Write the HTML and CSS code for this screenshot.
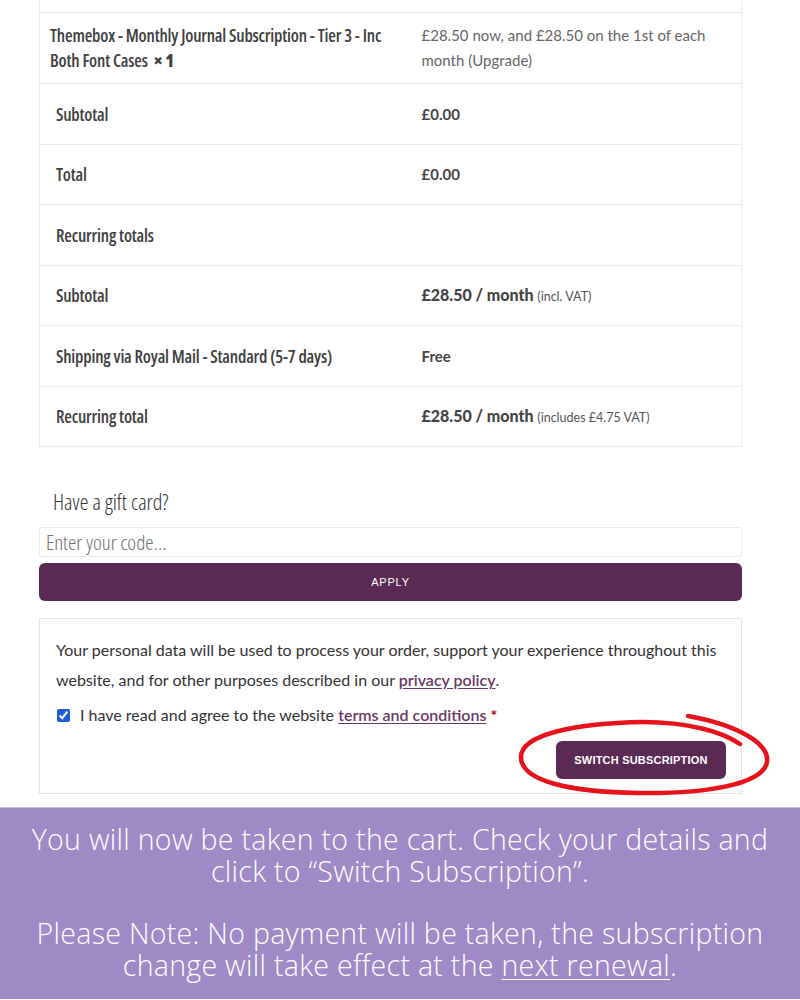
FILE: index.html
```html
<!DOCTYPE html>
<html lang="en">
<head>
<meta charset="utf-8">
<title>Checkout</title>
<link rel="stylesheet" href="styles.css">
</head>
<body>
<div class="page">
  <table class="totals">
    <colgroup><col class="col-label"><col class="col-value"></colgroup>
    <tbody>
      <tr class="stub"><td></td><td></td></tr>
      <tr class="product">
        <td class="name">Themebox - Monthly Journal Subscription - Tier 3 - Inc Both Font Cases&nbsp; <strong class="qty">× 1</strong></td>
        <td class="desc">£28.50 now, and £28.50 on the 1st of each month (Upgrade)</td>
      </tr>
      <tr><th>Subtotal</th><td class="amt">£0.00</td></tr>
      <tr><th>Total</th><td class="amt">£0.00</td></tr>
      <tr><th>Recurring totals</th><td></td></tr>
      <tr><th>Subtotal</th><td class="amt"><b>£28.50 / month</b> <small>(incl. VAT)</small></td></tr>
      <tr><th>Shipping via Royal Mail - Standard (5-7 days)</th><td class="amt">Free</td></tr>
      <tr><th>Recurring total</th><td class="amt"><b>£28.50 / month</b> <small>(includes £4.75 VAT)</small></td></tr>
    </tbody>
  </table>

  <section class="gift">
    <h3 class="gift-title">Have a gift card?</h3>
    <input class="gift-input" type="text" placeholder="Enter your code…">
    <button class="apply" type="button">APPLY</button>
  </section>

  <section class="place">
    <p class="privacy">Your personal data will be used to process your order, support your experience throughout this website, and for other purposes described in our <a href="#">privacy policy</a>.</p>
    <label class="terms"><input type="checkbox" checked> <span>I have read and agree to the website <a href="#">terms and conditions</a> <abbr class="req">*</abbr></span></label>
    <div class="actions">
      <button class="switch" type="button">SWITCH SUBSCRIPTION</button>
      <svg class="circle" width="270" height="96" viewBox="0 0 270 96" aria-hidden="true">
        <path d="M170 6 C215 14 252 32 249 52 C245 74 190 84 120 83 C55 82 3 72 3 47 C3 24 60 13 125 12 C170 12 205 22 222 34" fill="none" stroke="#e8121c" stroke-width="4.5" stroke-linecap="round"/>
      </svg>
    </div>
  </section>
</div>

<footer class="note">
  <p>You will now be taken to the cart. Check your details and click to “Switch Subscription”.</p>
  <p>Please Note: No payment will be taken, the subscription change will take effect at the <u>next renewal</u>.</p>
</footer>
</body>
</html>
```

FILE: styles.css
```css
html, body {
  margin: 0;
  padding: 0;
  background: #ffffff;
}

.page {
  width: 703px;
  margin-left: 39px;
  font-family: "Source Sans Pro", Lato, "Liberation Sans", sans-serif;
}

.totals {
  width: 100%;
  border-collapse: collapse;
  border: 1px solid #ebebeb;
  border-top: none;
  table-layout: fixed;
}

.col-label {
  width: 366px;
}

.totals td,
.totals th {
  border-top: 1px solid #ebebeb;
  text-align: left;
  vertical-align: middle;
  padding: 17.75px 16px;
  height: 24px;
  line-height: 24px;
  white-space: nowrap;
}

.totals th,
.totals td.name,
.gift-title,
.gift-input {
  font-family: "Open Sans", "DejaVu Sans Condensed", sans-serif;
  font-stretch: 75%;
}

.totals th {
  font-weight: 600;
  font-size: 17.5px;
  color: #404040;
  letter-spacing: -0.2px;
}

.totals tr.stub td {
  border-top: none;
  padding: 0;
  height: 12px;
}

.totals tr.product td {
  padding: 10px 16px 10px 10px;
  height: auto;
  line-height: 25px;
  white-space: normal;
}

.totals td.name {
  font-weight: 600;
  font-size: 17.5px;
  color: #404040;
  letter-spacing: -0.2px;
}

.totals tr.product td.desc {
  padding-left: 16px;
  font-size: 15px;
  color: #666;
  font-weight: 400;
}

.totals td.amt {
  font-size: 15px;
  color: #444;
  font-weight: 700;
}

.totals td.amt b,
.totals td.amt small {
  line-height: 1;
}

.totals td.amt b {
  font-size: 16px;
}

.totals td.amt small {
  font-size: 12.5px;
  font-weight: 400;
  color: #555;
}

.gift {
  margin-top: 38px;
  display: flex;
  flex-direction: column;
}

.gift-title {
  margin: 0 0 10px 14px;
  font-weight: 300;
  font-size: 22px;
  line-height: 32px;
  color: #333;
}

.gift-input {
  box-sizing: border-box;
  height: 30px;
  width: 100%;
  margin: 0;
  border: 1px solid #ececec;
  border-radius: 2px;
  padding: 0 6px;
  font-size: 21px;
  font-weight: 300;
  color: #333;
  outline: none;
}

.gift-input::placeholder {
  color: #6f6f6f;
}

.apply {
  margin-top: 6px;
  height: 38px;
  width: 100%;
  border: none;
  border-radius: 6px;
  background: #5b2953;
  color: #fff;
  font-family: "Liberation Sans", sans-serif;
  font-size: 11px;
  letter-spacing: 0.8px;
  font-weight: 400;
}

.place {
  margin-top: 17px;
  border: 1px solid #e6e6e6;
  padding: 16px 15px 14px 16px;
}

.privacy {
  margin: 0;
  font-size: 16px;
  line-height: 30px;
  color: #333;
}

.privacy a,
.terms a {
  color: #6a3a62;
  font-weight: 600;
  text-decoration: underline;
  text-underline-offset: 2px;
}

.terms {
  display: flex;
  align-items: center;
  gap: 10px;
  margin-top: 8px;
  padding-left: 1px;
  font-size: 16px;
  line-height: 24px;
  color: #333;
}

.terms input {
  margin: 0;
  width: 13px;
  height: 13px;
  accent-color: #1e5bd8;
}

.req {
  color: #b00;
  text-decoration: none;
  font-weight: 700;
}

.actions {
  position: relative;
  display: flex;
  justify-content: flex-end;
  margin-top: 14px;
}

.switch {
  height: 38px;
  width: 170px;
  padding: 0;
  border: none;
  border-radius: 6px;
  background: #5b2953;
  color: #fff;
  font-family: "Liberation Sans", sans-serif;
  font-weight: 700;
  font-size: 11px;
  letter-spacing: 0.2px;
  white-space: nowrap;
}

.circle {
  position: absolute;
  left: 462px;
  top: -31px;
  pointer-events: none;
  overflow: visible;
}

.note {
  margin-top: 13px;
  background: #9f89c6;
  border-top: 1px solid #c9bde0;
  color: #fff;
  text-align: center;
  font-family: "Open Sans", sans-serif;
  font-weight: 300;
  font-size: 28.5px;
  letter-spacing: 0.3px;
  line-height: 32px;
  padding: 15px 18px 18px;
}

.note p {
  margin: 0;
}

.note p + p {
  margin-top: 30px;
}

.note u {
  text-underline-offset: 3px;
  text-decoration-thickness: 1px;
}
```
